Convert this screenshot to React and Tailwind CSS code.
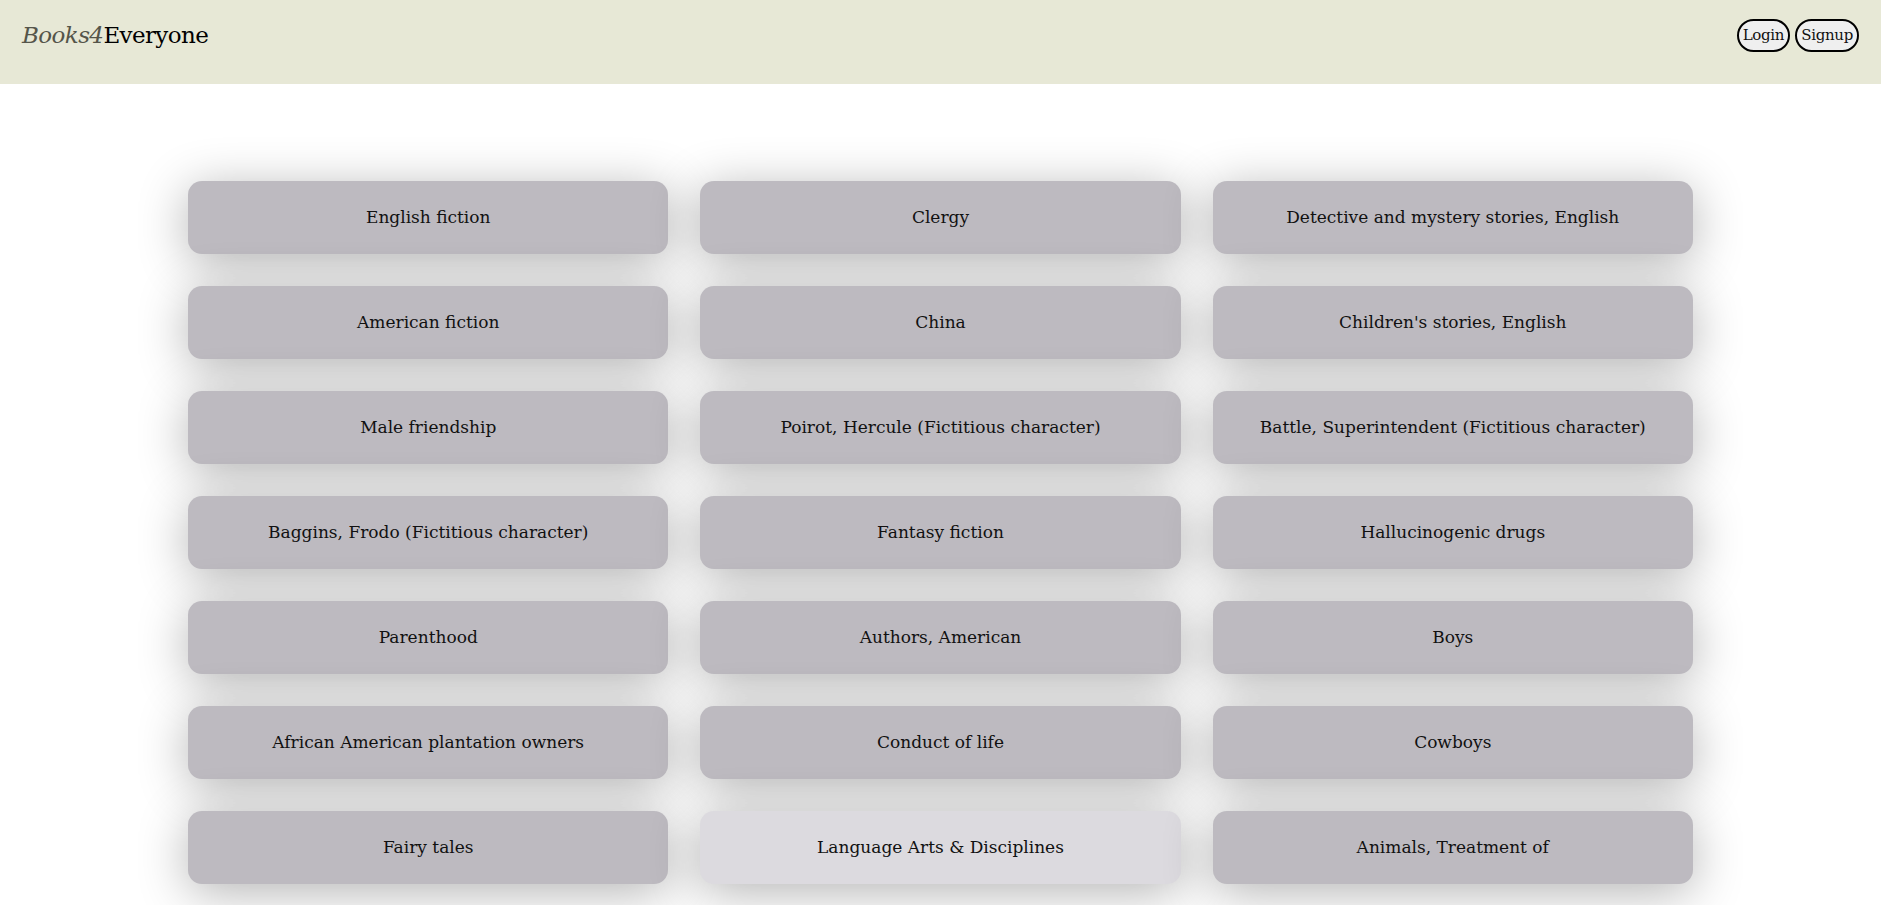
import React from "react";

const topics = [
  "English fiction",
  "Clergy",
  "Detective and mystery stories, English",
  "American fiction",
  "China",
  "Children's stories, English",
  "Male friendship",
  "Poirot, Hercule (Fictitious character)",
  "Battle, Superintendent (Fictitious character)",
  "Baggins, Frodo (Fictitious character)",
  "Fantasy fiction",
  "Hallucinogenic drugs",
  "Parenthood",
  "Authors, American",
  "Boys",
  "African American plantation owners",
  "Conduct of life",
  "Cowboys",
  "Fairy tales",
  "Language Arts & Disciplines",
  "Animals, Treatment of",
];

export default function App() {
  return (
    <div className="min-h-screen bg-white text-[#111]" style={{ fontFamily: '"DejaVu Serif", "Liberation Serif", serif' }}>
      <header className="h-[84px] bg-[#e7e8d6] flex items-center justify-between px-[22px] pb-[14px]">
        <div className="text-[23px] leading-none tracking-[-0.6px]">
          <span className="italic text-[#55554a]">Books4</span>
          <span className="text-black">Everyone</span>
        </div>
        <div className="flex gap-[5px]">
          <button className="h-[33px] px-[4px] rounded-full border-2 border-black bg-[#efefef] text-[15px] leading-none tracking-[-0.3px]">Login</button>
          <button className="h-[33px] px-[4px] rounded-full border-2 border-black bg-[#efefef] text-[15px] leading-none tracking-[-0.3px]">Signup</button>
        </div>
      </header>
      <main className="w-[80%] mx-auto mt-[97px] grid grid-cols-3 gap-x-[32px] gap-y-[32px] pb-[60px]">
        {topics.map((t) => (
          <div
            key={t}
            className={
              "h-[73px] rounded-[14px] flex items-center justify-center text-[17px] shadow-[0_8px_50px_rgba(0,0,0,0.3)] " +
              (t === "Language Arts & Disciplines" ? "bg-[#dcdadf]" : "bg-[#bdbac0]")
            }
          >
            {t}
          </div>
        ))}
      </main>
    </div>
  );
}
